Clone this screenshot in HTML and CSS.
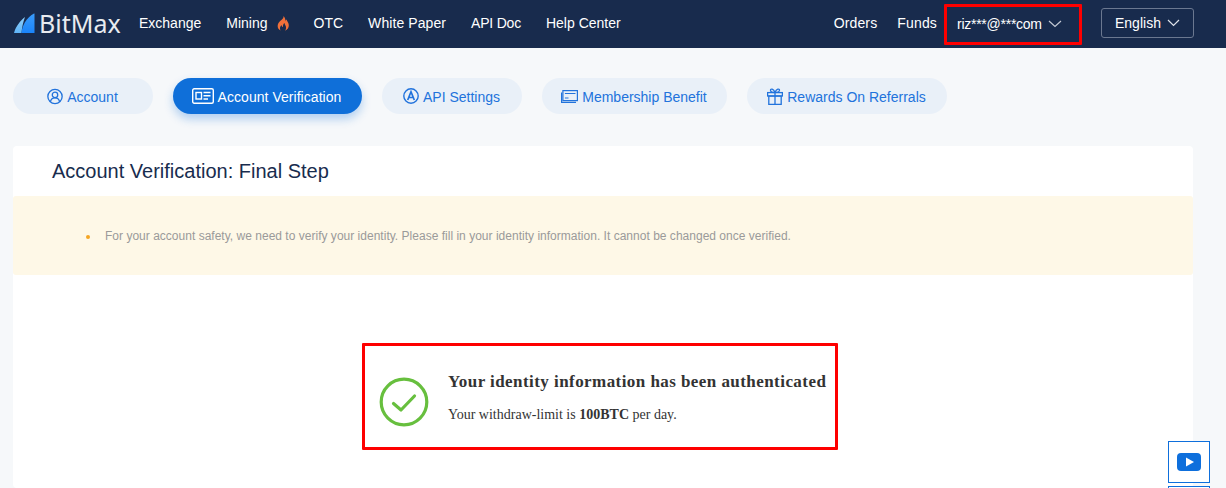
FILE: index.html
```html
<!DOCTYPE html>
<html lang="en">
<head>
<meta charset="utf-8">
<title>BitMax - Account Verification</title>
<link rel="stylesheet" href="styles.css">
</head>
<body>
<header class="topbar">
  <a class="logo">
    <svg class="logo-mark" width="21" height="21" viewBox="0 0 21 21">
      <defs>
        <linearGradient id="lg1" x1="0" y1="0" x2="0" y2="1"><stop offset="0" stop-color="#8fd0fb"/><stop offset="1" stop-color="#5fb4f7"/></linearGradient>
        <linearGradient id="lg2" x1="0" y1="0" x2="0" y2="1"><stop offset="0" stop-color="#3a9cfb"/><stop offset="1" stop-color="#1a84fa"/></linearGradient>
      </defs>
      <path d="M0 20C2 13 6 8 11 4C9 9 8 15 7.500 20Z" fill="url(#lg1)"/>
      <path d="M7.500 20C8 13 12 5 20 0.500C20.500 0.300 20.500 1 20.500 1.500V20Z" fill="url(#lg2)"/>
    </svg>
    <span class="logo-text">BitMax</span>
  </a>
  <nav class="nav-main">
    <a>Exchange</a>
    <a class="nav-mining">Mining
      <svg width="12" height="15" viewBox="0 0 12 15"><path d="M6.500 0C7 3 3.500 4 1.500 7C0 9.500 0.500 13 3.500 14.500C2.500 12.500 3 10.500 4.500 9C4.800 10.500 5.500 11 6 11C5.800 9.500 6.300 8 7.500 7C7.500 9 9.500 10 9 12.500C8.800 13.300 8.500 14 8 14.700C10.500 13.800 12 11.500 11.800 9C11.600 6.500 10 5.500 9.500 3.500C8.700 4 8.500 5 8.500 5.500C8.500 3.500 8 1.500 6.500 0Z" fill="#f0703a"/></svg>
    </a>
    <a>OTC</a>
    <a class="nav-wide">White Paper</a>
    <a class="nav-narrow">API Doc</a>
    <a>Help Center</a>
  </nav>
  <div class="nav-right">
    <a class="nav-plain">Orders</a>
    <a class="nav-plain nav-funds">Funds</a>
    <a class="user-menu"><span class="user-name">riz***@***com</span>
      <svg width="14" height="8" viewBox="0 0 14 8"><path d="M1 1L7 6.500L13 1" fill="none" stroke="#c3c9d4" stroke-width="1.200"/></svg>
    </a>
    <a class="lang">English
      <svg width="13" height="8" viewBox="0 0 13 8"><path d="M1 1L6.500 6.500L12 1" fill="none" stroke="#dfe3ea" stroke-width="1.200"/></svg>
    </a>
  </div>
</header>

<main class="page">
  <div class="tabs">
    <a class="tab tab-account">
      <svg width="16" height="17" viewBox="0 0 17 17" fill="none" stroke="currentColor" stroke-width="1.400"><circle cx="8.500" cy="8.500" r="7.600"/><circle cx="8.500" cy="6.800" r="2.900"/><path d="M3.500 14.200C4.200 11.500 6 10 8.500 10S12.800 11.500 13.500 14.200"/></svg>
      Account
    </a>
    <a class="tab tab-active">
      <svg width="22" height="16" viewBox="0 0 22 16" fill="none" stroke="currentColor" stroke-width="1.400"><rect x="0.700" y="0.700" width="20.600" height="14.600" rx="1.500"/><rect x="4" y="4.500" width="5.500" height="6.500"/><path d="M11.500 4.500H18.500M11.500 7.700H18.500M11.500 11H16"/></svg>
      Account Verification
    </a>
    <a class="tab tab-api">
      <svg width="16" height="16" viewBox="0 0 16 16" fill="none" stroke="currentColor"><circle cx="8" cy="8" r="7.200" stroke-width="1.400"/><path d="M4.700 12L8 3.800L11.300 12M5.800 9.500H10.200" stroke-width="1.700"/></svg>
      API Settings
    </a>
    <a class="tab tab-member">
      <svg width="17" height="13" viewBox="0 0 17 13" fill="none" stroke="currentColor" stroke-width="1.200"><rect x="1.900" y="0.600" width="14.500" height="10"/><path d="M0.600 2.500V12.400H15M3.900 3.500H14.500M3.900 8H7.500"/></svg>
      Membership Benefit
    </a>
    <a class="tab tab-rewards">
      <svg width="16" height="17" viewBox="0 0 16 17" fill="none" stroke="currentColor" stroke-width="1.300"><rect x="0.600" y="4.600" width="14.800" height="3.400"/><rect x="1.800" y="8" width="12.400" height="8.400"/><path d="M8 4.600V16.400M8 4.500C6 4.500 3.500 3.800 3.500 2.200C3.500 0.500 6.500 0.500 8 4.500C9.500 0.500 12.500 0.500 12.500 2.200C12.500 3.800 10 4.500 8 4.500Z"/></svg>
      Rewards On Referrals
    </a>
  </div>

  <section class="card">
    <h1 class="card-title">Account Verification: Final Step</h1>
    <div class="notice">
      <ul class="notice-list">
        <li>For your account safety, we need to verify your identity. Please fill in your identity information. It cannot be changed once verified.</li>
      </ul>
    </div>
    <div class="result-wrap">
      <div class="result">
        <svg class="result-icon" width="50" height="50" viewBox="0 0 50 50" fill="none" stroke="#67bf3e"><circle cx="25" cy="25" r="22.800" stroke-width="3.200"/><path d="M14.500 26.500L22 33L35.500 19" stroke-width="3.200" stroke-linecap="round" stroke-linejoin="round"/></svg>
        <div class="result-text">
          <h2 class="result-title">Your identity information has been authenticated</h2>
          <p class="result-desc">Your withdraw-limit is <b>100BTC</b> per day.</p>
        </div>
      </div>
    </div>
  </section>
</main>

<aside class="float-rail">
  <a class="float-btn">
    <svg width="24" height="18" viewBox="0 0 24 18"><rect width="24" height="18" rx="4" fill="#0e6fdc"/><path d="M9 4.500L17 9L9 13.500Z" fill="#fff"/></svg>
  </a>
  <a class="float-btn"></a>
</aside>
</body>
</html>
```
FILE: styles.css
```css
* { box-sizing: border-box; }
html, body { margin: 0; height: 488px; overflow: hidden; }
body {
  background: #f6f8fa;
  font-family: "Liberation Sans", Arial, sans-serif;
  font-size: 14px;
  color: #182c4e;
}
.topbar {
  height: 48px;
  background: #182b4d;
  color: #fff;
  display: flex;
  align-items: center;
  padding: 0 0 2px 14px;
}
.logo { display: flex; align-items: center; width: 125px; }
.logo-text {
  font-family: "Noto Sans", sans-serif;
  font-size: 25px;
  line-height: 46px;
  color: #e8ebf0;
  margin-left: 4px;
  margin-right: auto;
}
.nav-main { display: flex; gap: 25px; align-items: center; }
.nav-mining { display: flex; align-items: center; gap: 9px; }
.nav-wide { letter-spacing: 0.08px; }
.nav-narrow { letter-spacing: -0.2px; }
.nav-right { margin-left: auto; display: flex; align-items: center; margin-right: 32px; }
.nav-plain { letter-spacing: 0.15px; }
.nav-funds { margin-left: 20px; }
.user-menu {
  display: flex;
  align-items: center;
  gap: 6px;
  height: 41px;
  width: 138px;
  margin: 3px 0 0 7px;
  padding: 0 0 2px 10px;
  border: 3px solid #fe0000;
  border-radius: 1px;
}
.user-name { letter-spacing: -0.26px; }
.lang {
  display: flex;
  align-items: center;
  gap: 6px;
  width: 93px;
  height: 30px;
  margin-left: 19px;
  padding-left: 13px;
  border: 1px solid #6b7890;
  border-radius: 3px;
}
.page { padding: 30px 33px 0 13px; }
.tabs { display: flex; gap: 20px; }
.tab {
  height: 36px;
  padding: 2px 1px 0 0;
  border-radius: 18px;
  background: #e9f0f8;
  color: #2273dc;
  display: flex;
  align-items: center;
  justify-content: center;
  gap: 4px;
}
.tab svg { margin-top: -2px; }
.tab-account { width: 140px; }
.tab-active { width: 189px; padding-right: 2px; letter-spacing: 0.04px; background: #0f6fd9; color: #fff; box-shadow: 0 5px 10px rgba(15, 111, 217, 0.3); }
.tab-api { width: 140px; }
.tab-member { width: 185px; }
.tab-rewards { width: 200px; }
.card {
  margin-top: 32px;
  background: #fff;
  border-radius: 4px;
  height: 342px;
}
.card-title {
  margin: 0;
  height: 50px;
  padding-left: 39px;
  font-size: 20px;
  font-weight: 400;
  line-height: 50px;
  color: #182c4e;
}
.notice {
  height: 79px;
  background: #fef8e7;
  border-radius: 3px;
  display: flex;
  align-items: center;
}
.notice-list {
  margin: 0;
  padding: 0 0 0 92px;
  list-style: none;
  font-size: 12px;
  letter-spacing: 0.015px;
  color: #9a9a9a;
}
.notice-list li { position: relative; }
.notice-list li::before {
  content: "";
  position: absolute;
  left: -19px;
  top: 6px;
  width: 4px;
  height: 4px;
  border-radius: 50%;
  background: #f5a623;
}
.result-wrap { display: flex; justify-content: flex-start; padding: 68px 0 0 349px; }
.result {
  width: 476px;
  height: 107px;
  border: 3px solid #fe0000;
  border-radius: 1px;
  display: flex;
  align-items: center;
  padding-left: 14px;
  font-family: "Liberation Serif", "Times New Roman", serif;
  color: #333;
}
.result-icon { flex: none; margin-top: 10px; }
.result-text { margin: 2px 0 0 19px; white-space: nowrap; }
.result-title { margin: 0; font-size: 17px; font-weight: 700; letter-spacing: 0.44px; line-height: 20px; }
.result-desc { margin: 15px 0 0; font-size: 14px; line-height: 16px; }
.float-rail {
  position: fixed;
  left: 1168px;
  top: 441px;
  height: 47px;
  overflow: hidden;
  display: flex;
  flex-direction: column;
  gap: 3px;
}
.float-btn {
  flex: none;
  width: 42px;
  height: 42px;
  background: #fff;
  border: 1px solid #0e6fdc;
  display: flex;
  align-items: center;
  justify-content: center;
}
```
